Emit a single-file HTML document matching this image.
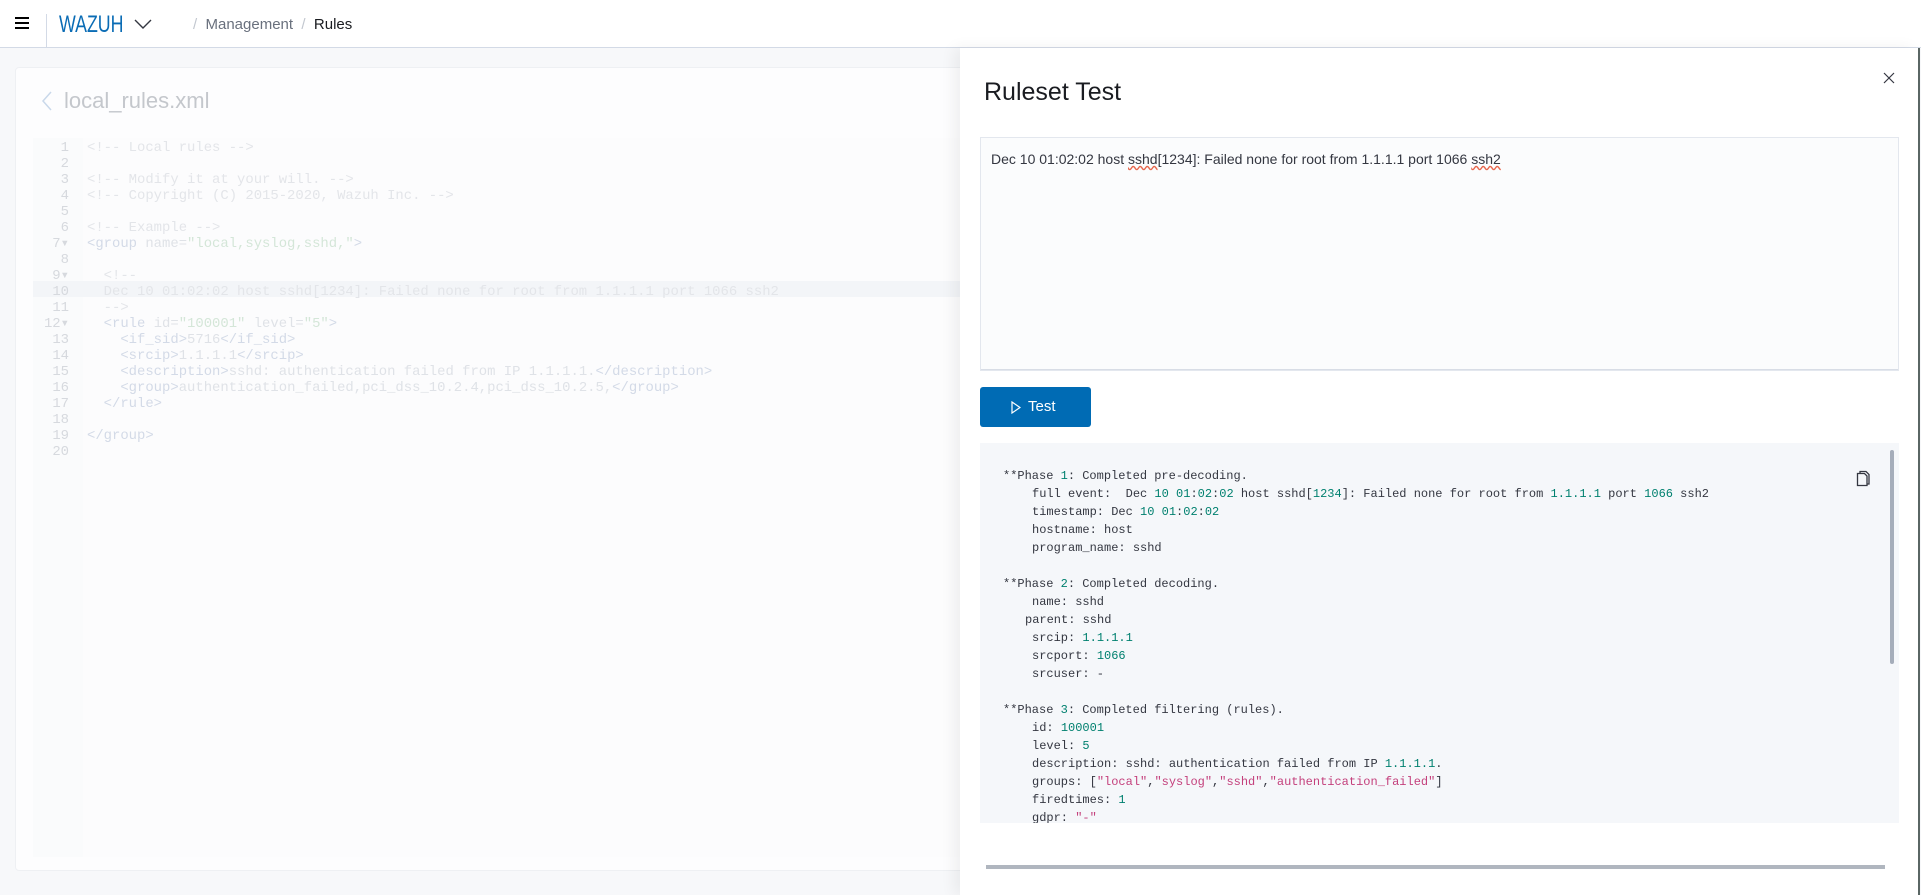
<!DOCTYPE html>
<html><head><meta charset="utf-8"><style>
*{box-sizing:border-box;margin:0;padding:0}
body{width:1921px;height:895px;overflow:hidden;background:#f7f8fa;font-family:"Liberation Sans",sans-serif;position:relative}
.hdr{position:absolute;left:0;top:0;width:1921px;height:48px;background:#fff;border-bottom:1px solid #d3dae6}
.mono{font-family:"Liberation Mono",monospace}
.card{position:absolute;left:15px;top:67px;width:1000px;height:804px;background:#fdfdfe;border:1px solid #eef0f3;border-radius:4px}
.code{position:absolute;left:33px;top:138px;width:930px;height:719px;background:#fcfcfd}
.gut{position:absolute;left:33px;top:138px;width:50px;height:719px;background:#fafbfc}
.ln{position:absolute;left:33px;width:930px;height:16px;font-size:13.9px;line-height:16px;white-space:pre;color:#dfe2e7}
.ln .n{display:inline-block;width:36px;text-align:right;color:#d6d9de}
.ln .t{position:absolute;left:54px}
.c{color:#e3e5e9}.g{color:#d3dae7}.s{color:#d4e6d8}
.fly{position:absolute;left:960px;top:48px;width:958px;height:847px;background:#fff;box-shadow:-6px 0 14px rgba(0,0,0,.06)}
.res{position:absolute;left:980px;top:443px;width:919px;height:380px;background:#f5f7fa;overflow:hidden}
.rl{position:absolute;font-size:12px;line-height:18px;white-space:pre;color:#343741}
.nm{color:#00806f}.st{color:#c4407c}
</style></head><body>
<div class="hdr">
 <div style="position:absolute;left:15px;top:17px;width:14px;height:2px;background:#000;box-shadow:0 5px 0 #000,0 10px 0 #000"></div>
 <div style="position:absolute;left:46px;top:14px;width:1px;height:34px;background:#d3dae6"></div>
 <div style="position:absolute;left:59px;top:11px;font-size:24px;color:#0a6cb5;transform:scaleX(0.74);transform-origin:0 0">WAZUH</div>
 <svg style="position:absolute;left:134px;top:18px" width="18" height="12" viewBox="0 0 18 12"><path d="M1 2l8 8 8-8" fill="none" stroke="#343741" stroke-width="1.4"/></svg>
 <div style="position:absolute;left:193px;top:16px;font-size:15px;color:#69707d"><span style="color:#c2c7cf">/</span>&nbsp; Management &nbsp;<span style="color:#c2c7cf">/</span>&nbsp; <span style="color:#1a1c21">Rules</span></div>
</div>
<div class="card"></div>
<svg style="position:absolute;left:40px;top:90px" width="14" height="22" viewBox="0 0 14 22"><path d="M11 2L3 11l8 9" fill="none" stroke="#c9d8ea" stroke-width="1.5"/></svg>
<div style="position:absolute;left:64px;top:88px;font-size:22px;color:#c4c7cc">local_rules.xml</div>
<div class="code"></div><div class="gut"></div>
<div style="position:absolute;left:33px;top:281px;width:930px;height:16px;background:#f3f5f8"></div>
<div class="mono">
<div class="ln" style="top:140px"><span class="n">1</span><span class="t c">&lt;!-- Local rules --&gt;</span></div>
<div class="ln" style="top:156px"><span class="n">2</span></div>
<div class="ln" style="top:172px"><span class="n">3</span><span class="t c">&lt;!-- Modify it at your will. --&gt;</span></div>
<div class="ln" style="top:188px"><span class="n">4</span><span class="t c">&lt;!-- Copyright (C) 2015-2020, Wazuh Inc. --&gt;</span></div>
<div class="ln" style="top:204px"><span class="n">5</span></div>
<div class="ln" style="top:220px"><span class="n">6</span><span class="t c">&lt;!-- Example --&gt;</span></div>
<div class="ln" style="top:236px"><span class="n">7▾</span><span class="t"><span class="g">&lt;group</span> name=<span class="s">"local,syslog,sshd,"</span><span class="g">&gt;</span></span></div>
<div class="ln" style="top:252px"><span class="n">8</span></div>
<div class="ln" style="top:268px"><span class="n">9▾</span><span class="t c">  &lt;!--</span></div>
<div class="ln" style="top:284px"><span class="n">10</span><span class="t c">  Dec 10 01:02:02 host sshd[1234]: Failed none for root from 1.1.1.1 port 1066 ssh2</span></div>
<div class="ln" style="top:300px"><span class="n">11</span><span class="t c">  --&gt;</span></div>
<div class="ln" style="top:316px"><span class="n">12▾</span><span class="t">  <span class="g">&lt;rule</span> id=<span class="s">"100001"</span> level=<span class="s">"5"</span><span class="g">&gt;</span></span></div>
<div class="ln" style="top:332px"><span class="n">13</span><span class="t">    <span class="g">&lt;if_sid&gt;</span>5716<span class="g">&lt;/if_sid&gt;</span></span></div>
<div class="ln" style="top:348px"><span class="n">14</span><span class="t">    <span class="g">&lt;srcip&gt;</span>1.1.1.1<span class="g">&lt;/srcip&gt;</span></span></div>
<div class="ln" style="top:364px"><span class="n">15</span><span class="t">    <span class="g">&lt;description&gt;</span>sshd: authentication failed from IP 1.1.1.1.<span class="g">&lt;/description&gt;</span></span></div>
<div class="ln" style="top:380px"><span class="n">16</span><span class="t">    <span class="g">&lt;group&gt;</span>authentication_failed,pci_dss_10.2.4,pci_dss_10.2.5,<span class="g">&lt;/group&gt;</span></span></div>
<div class="ln" style="top:396px"><span class="n">17</span><span class="t">  <span class="g">&lt;/rule&gt;</span></span></div>
<div class="ln" style="top:412px"><span class="n">18</span></div>
<div class="ln" style="top:428px"><span class="n">19</span><span class="t g">&lt;/group&gt;</span></div>
<div class="ln" style="top:444px"><span class="n">20</span></div>
</div>

<div class="fly"></div>
<div style="position:absolute;left:1918px;top:48px;width:2px;height:847px;background:#5a6664"></div>
<div style="position:absolute;left:984px;top:78px;font-size:25px;color:#1a1c21">Ruleset Test</div>
<svg style="position:absolute;left:1883px;top:72px" width="12" height="12" viewBox="0 0 12 12"><path d="M1 1l10 10M11 1L1 11" stroke="#343741" stroke-width="1.2"/></svg>
<div style="position:absolute;left:980px;top:137px;width:919px;height:234px;background:#fbfcfd;border:1px solid #e3e7ee;box-shadow:inset 0 -1px 0 #d8dde6"></div>
<div style="position:absolute;left:991px;top:151px;font-size:14px;color:#343741;white-space:pre">Dec 10 01:02:02 host <span style="text-decoration:underline wavy #e7664c">sshd</span>[1234]: Failed none for root from 1.1.1.1 port 1066 <span style="text-decoration:underline wavy #e7664c">ssh2</span></div>
<div style="position:absolute;left:980px;top:387px;width:111px;height:40px;background:#006bb4;border-radius:3px;color:#fff;font-size:15px;line-height:40px;padding-left:30px"><svg style="position:absolute;left:31px;top:14px" width="10" height="13" viewBox="0 0 10 13"><path d="M1 1l8 5.5L1 12z" fill="none" stroke="#fff" stroke-width="1.2"/></svg><span style="margin-left:18px">Test</span></div>
<div class="res"></div>
<div class="mono">
<div class="rl" style="left:1003px;top:467px">**Phase <span class="nm">1</span>: Completed pre-decoding.</div>
<div class="rl" style="left:1032px;top:485px">full event:  Dec <span class="nm">10 01</span>:<span class="nm">02</span>:<span class="nm">02</span> host sshd[<span class="nm">1234</span>]: Failed none for root from <span class="nm">1.1.1.1</span> port <span class="nm">1066</span> ssh2</div>
<div class="rl" style="left:1032px;top:503px">timestamp: Dec <span class="nm">10 01</span>:<span class="nm">02</span>:<span class="nm">02</span></div>
<div class="rl" style="left:1032px;top:521px">hostname: host</div>
<div class="rl" style="left:1032px;top:539px">program_name: sshd</div>
<div class="rl" style="left:1003px;top:575px">**Phase <span class="nm">2</span>: Completed decoding.</div>
<div class="rl" style="left:1032px;top:593px">name: sshd</div>
<div class="rl" style="left:1025px;top:611px">parent: sshd</div>
<div class="rl" style="left:1032px;top:629px">srcip: <span class="nm">1.1.1.1</span></div>
<div class="rl" style="left:1032px;top:647px">srcport: <span class="nm">1066</span></div>
<div class="rl" style="left:1032px;top:665px">srcuser: -</div>
<div class="rl" style="left:1003px;top:701px">**Phase <span class="nm">3</span>: Completed filtering (rules).</div>
<div class="rl" style="left:1032px;top:719px">id: <span class="nm">100001</span></div>
<div class="rl" style="left:1032px;top:737px">level: <span class="nm">5</span></div>
<div class="rl" style="left:1032px;top:755px">description: sshd: authentication failed from IP <span class="nm">1.1.1.1</span>.</div>
<div class="rl" style="left:1032px;top:773px">groups: [<span class="st">"local"</span>,<span class="st">"syslog"</span>,<span class="st">"sshd"</span>,<span class="st">"authentication_failed"</span>]</div>
<div class="rl" style="left:1032px;top:791px">firedtimes: <span class="nm">1</span></div>
<div class="rl" style="left:1032px;top:809px;height:14px;overflow:hidden">gdpr: <span class="st">"-"</span></div>
</div>
<svg style="position:absolute;left:1856px;top:470px" width="14" height="17" viewBox="0 0 14 17"><path d="M4 3V1.5h6l3 3V14h-2M1.5 3.5h7l2.5 2.5v9.5h-9.5z" fill="none" stroke="#343741" stroke-width="1.3"/></svg>
<div style="position:absolute;left:1890px;top:450px;width:4px;height:214px;background:#a5adba;border-radius:2px"></div>
<div style="position:absolute;left:986px;top:865px;width:899px;height:4px;background:#b0b6bf"></div>
</body></html>
